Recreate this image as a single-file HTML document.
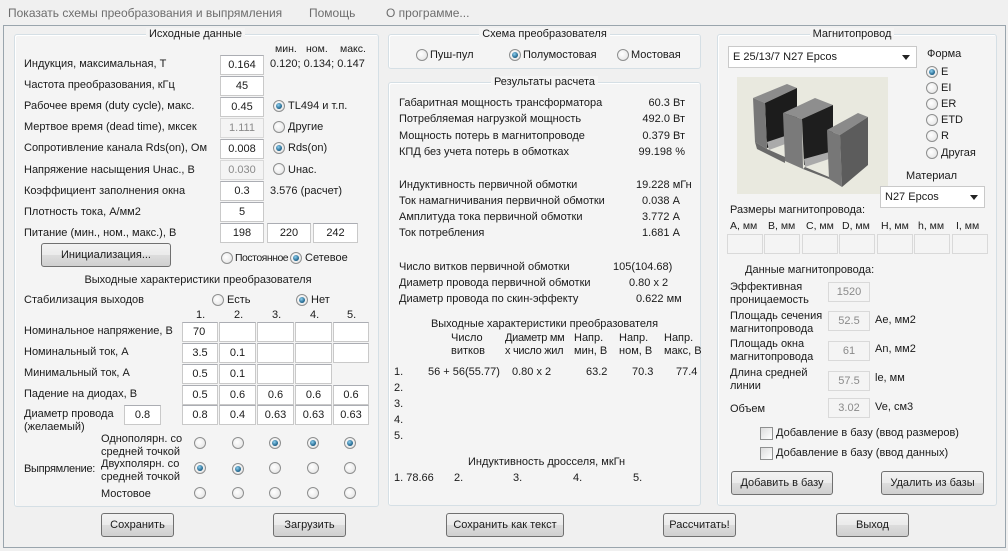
<!DOCTYPE html><html><head><meta charset="utf-8"><style>
*{margin:0;padding:0;box-sizing:border-box}
body{width:1008px;height:551px;background:#f0f0f0;font-family:"Liberation Sans","DejaVu Sans",sans-serif;font-size:11px;color:#1a1a1a;position:relative;overflow:hidden}
.t{position:absolute;white-space:nowrap;line-height:14px}
.g{position:absolute;border:1px solid #d5dfe5;border-radius:3px;background:#f4f4f4;box-shadow:inset 1px 1px 0 #fff}
.gt{position:absolute;top:-8px;left:0;right:0;text-align:center;line-height:14px}
.gt span{background:#f4f4f4;padding:0 3px}
.i{position:absolute;height:20px;background:#fff;border:1px solid #c9c9c9;border-top-color:#abadb3;text-align:center;line-height:18px}
.d{background:#f4f4f4;color:#8a8a8a;border-color:#d9d9d9}
.r{position:absolute;width:12px;height:12px;border-radius:50%;border:1px solid #8e8f8f;background:radial-gradient(circle at 40% 40%,#fff,#e0e0e0)}
.r.c::after{content:"";position:absolute;left:2px;top:2px;width:6px;height:6px;border-radius:50%;background:radial-gradient(circle at 40% 35%,#8fd0f0,#1a5f87 70%,#0d3e5e)}
.b{position:absolute;height:24px;border:1px solid #707070;border-radius:3px;background:linear-gradient(#f2f2f2 0,#ebebeb 50%,#dddddd 51%,#cfcfcf 100%);text-align:center;line-height:22px}
.cb{position:absolute;width:13px;height:13px;border:1px solid #8e8f8f;background:linear-gradient(135deg,#dcdcdc,#fff)}
.cmb{position:absolute;height:22px;background:#fff;border:1px solid #c9c9c9;line-height:20px;padding-left:4px}
.cmb::after{content:"";position:absolute;right:6px;top:8px;border:4px solid transparent;border-top:5px solid #222}
.rt{text-align:right}
</style></head><body>
<div class="t" style="left:8px;top:6px;color:#6d6d6d;font-size:12px">Показать схемы преобразования и выпрямления</div>
<div class="t" style="left:309px;top:6px;color:#6d6d6d;font-size:12px">Помощь</div>
<div class="t" style="left:386px;top:6px;color:#6d6d6d;font-size:12px">О программе...</div>
<div style="position:absolute;left:3px;top:25px;width:1003px;height:523px;border:1px solid #9aa5ad;background:#f0f0f0"></div>

<!-- Left group -->
<div class="g" style="left:14px;top:34px;width:365px;height:473px"><div class="gt" style="left:-2px"><span>Исходные данные</span></div></div>
<div class="t" style="left:275px;top:42px;font-size:10.5px">мин.</div>
<div class="t" style="left:306px;top:42px;font-size:10.5px">ном.</div>
<div class="t" style="left:340px;top:42px;font-size:10.5px">макс.</div>
<div class="t" style="left:24px;top:57px">Индукция, максимальная, Т</div><div class="i" style="left:220px;top:55px;width:44px">0.164</div><div class="t" style="left:270px;top:57px">0.120; 0.134; 0.147</div>
<div class="t" style="left:24px;top:78px">Частота преобразования, кГц</div><div class="i" style="left:220px;top:76px;width:44px">45</div>
<div class="t" style="left:24px;top:99px">Рабочее время (duty cycle), макс.</div><div class="i" style="left:220px;top:97px;width:44px">0.45</div><div class="r c" style="left:273px;top:100px"></div><div class="t" style="left:288px;top:99px">TL494 и т.п.</div>
<div class="t" style="left:24px;top:120px">Мертвое время (dead time), мксек</div><div class="i d" style="left:220px;top:118px;width:44px">1.111</div><div class="r" style="left:273px;top:121px"></div><div class="t" style="left:288px;top:120px">Другие</div>
<div class="t" style="left:24px;top:141px">Сопротивление канала Rds(on), Ом</div><div class="i" style="left:220px;top:139px;width:44px">0.008</div><div class="r c" style="left:273px;top:142px"></div><div class="t" style="left:288px;top:141px">Rds(on)</div>
<div class="t" style="left:24px;top:163px">Напряжение насыщения Uнас., В</div><div class="i d" style="left:220px;top:160px;width:44px">0.030</div><div class="r" style="left:273px;top:163px"></div><div class="t" style="left:288px;top:163px">Uнас.</div>
<div class="t" style="left:24px;top:184px">Коэффициент заполнения окна</div><div class="i" style="left:220px;top:181px;width:44px">0.3</div><div class="t" style="left:270px;top:184px">3.576 (расчет)</div>
<div class="t" style="left:24px;top:205px">Плотность тока, А/мм2</div><div class="i" style="left:220px;top:202px;width:44px">5</div>
<div class="t" style="left:24px;top:226px">Питание (мин., ном., макс.), В</div><div class="i" style="left:220px;top:223px;width:44px">198</div><div class="i" style="left:267px;top:223px;width:44px">220</div><div class="i" style="left:313px;top:223px;width:45px">242</div>
<div class="b" style="left:41px;top:243px;width:130px">Инициализация...</div>
<div class="r" style="left:221px;top:252px"></div><div class="t" style="left:235px;top:251px;font-size:10.5px;letter-spacing:-0.5px">Постоянное</div>
<div class="r c" style="left:290px;top:252px"></div><div class="t" style="left:305px;top:251px">Сетевое</div>
<div class="t" style="left:0;width:396px;text-align:center;top:273px">Выходные характеристики преобразователя</div>
<div class="t" style="left:24px;top:293px">Стабилизация выходов</div>
<div class="r" style="left:212px;top:294px"></div><div class="t" style="left:227px;top:293px">Есть</div>
<div class="r c" style="left:296px;top:294px"></div><div class="t" style="left:311px;top:293px">Нет</div>
<div class="t" style="left:196px;top:308px">1.</div><div class="t" style="left:234px;top:308px">2.</div><div class="t" style="left:272px;top:308px">3.</div><div class="t" style="left:310px;top:308px">4.</div><div class="t" style="left:347px;top:308px">5.</div>
<div class="t" style="left:24px;top:324px">Номинальное напряжение, В</div>
<div class="t" style="left:24px;top:345px">Номинальный ток, А</div>
<div class="t" style="left:24px;top:366px">Минимальный ток, А</div>
<div class="t" style="left:24px;top:387px">Падение на диодах, В</div>
<div class="t" style="left:24px;top:407px">Диаметр провода</div><div class="t" style="left:24px;top:420px">(желаемый)</div>
<div class="i" style="left:124px;top:405px;width:37px">0.8</div>
<div class="i" style="left:182px;top:322px;width:36px;text-align:left;padding-left:10px">70</div><div class="i" style="left:219px;top:322px;width:37px"></div><div class="i" style="left:257px;top:322px;width:37px"></div><div class="i" style="left:295px;top:322px;width:37px"></div><div class="i" style="left:333px;top:322px;width:36px"></div>
<div class="i" style="left:182px;top:343px;width:36px">3.5</div><div class="i" style="left:219px;top:343px;width:37px">0.1</div><div class="i" style="left:257px;top:343px;width:37px"></div><div class="i" style="left:295px;top:343px;width:37px"></div><div class="i" style="left:333px;top:343px;width:36px"></div>
<div class="i" style="left:182px;top:364px;width:36px">0.5</div><div class="i" style="left:219px;top:364px;width:37px">0.1</div><div class="i" style="left:257px;top:364px;width:37px"></div><div class="i" style="left:295px;top:364px;width:37px"></div>
<div class="i" style="left:182px;top:385px;width:36px">0.5</div><div class="i" style="left:219px;top:385px;width:37px">0.6</div><div class="i" style="left:257px;top:385px;width:37px">0.6</div><div class="i" style="left:295px;top:385px;width:37px">0.6</div><div class="i" style="left:333px;top:385px;width:36px">0.6</div>
<div class="i" style="left:182px;top:405px;width:36px">0.8</div><div class="i" style="left:219px;top:405px;width:37px">0.4</div><div class="i" style="left:257px;top:405px;width:37px">0.63</div><div class="i" style="left:295px;top:405px;width:37px">0.63</div><div class="i" style="left:333px;top:405px;width:36px">0.63</div>
<div class="t" style="left:101px;top:433px;line-height:13px">Однополярн. со<br>средней точкой</div>
<div class="t" style="left:101px;top:458px;line-height:13px">Двухполярн. со<br>средней точкой</div>
<div class="t" style="left:24px;top:462px;letter-spacing:-0.3px">Выпрямление:</div>
<div class="t" style="left:101px;top:487px">Мостовое</div>
<div class="r" style="left:194px;top:437px"></div><div class="r" style="left:232px;top:437px"></div><div class="r c" style="left:269px;top:437px"></div><div class="r c" style="left:307px;top:437px"></div><div class="r c" style="left:344px;top:437px"></div>
<div class="r c" style="left:194px;top:462px"></div><div class="r c" style="left:232px;top:463px"></div><div class="r" style="left:269px;top:462px"></div><div class="r" style="left:307px;top:462px"></div><div class="r" style="left:344px;top:462px"></div>
<div class="r" style="left:194px;top:487px"></div><div class="r" style="left:232px;top:487px"></div><div class="r" style="left:269px;top:487px"></div><div class="r" style="left:307px;top:487px"></div><div class="r" style="left:344px;top:487px"></div>

<!-- Middle -->
<div class="g" style="left:388px;top:34px;width:313px;height:35px"><div class="gt"><span>Схема преобразователя</span></div></div>
<div class="r" style="left:416px;top:49px"></div><div class="t" style="left:430px;top:48px">Пуш-пул</div>
<div class="r c" style="left:509px;top:49px"></div><div class="t" style="left:523px;top:48px">Полумостовая</div>
<div class="r" style="left:617px;top:49px"></div><div class="t" style="left:631px;top:48px">Мостовая</div>
<div class="g" style="left:388px;top:82px;width:313px;height:424px"><div class="gt"><span>Результаты расчета</span></div></div>
<div class="t" style="left:399px;top:96px">Габаритная мощность трансформатора</div><div class="t rt" style="left:600px;width:85px;top:96px">60.3 Вт</div>
<div class="t" style="left:399px;top:112px">Потребляемая нагрузкой мощность</div><div class="t rt" style="left:600px;width:85px;top:112px">492.0 Вт</div>
<div class="t" style="left:399px;top:129px">Мощность потерь в магнитопроводе</div><div class="t rt" style="left:600px;width:85px;top:129px">0.379 Вт</div>
<div class="t" style="left:399px;top:145px">КПД без учета потерь в обмотках</div><div class="t rt" style="left:600px;width:85px;top:145px">99.198 %</div>
<div class="t" style="left:399px;top:178px">Индуктивность первичной обмотки</div><div class="t" style="left:636px;top:178px">19.228 мГн</div>
<div class="t" style="left:399px;top:194px">Ток намагничивания первичной обмотки</div><div class="t" style="left:642px;top:194px">0.038 А</div>
<div class="t" style="left:399px;top:210px">Амплитуда тока первичной обмотки</div><div class="t" style="left:642px;top:210px">3.772 А</div>
<div class="t" style="left:399px;top:226px">Ток потребления</div><div class="t" style="left:642px;top:226px">1.681 А</div>
<div class="t" style="left:399px;top:260px">Число витков первичной обмотки</div><div class="t" style="left:613px;top:260px">105(104.68)</div>
<div class="t" style="left:399px;top:276px">Диаметр провода первичной обмотки</div><div class="t" style="left:629px;top:276px">0.80 x 2</div>
<div class="t" style="left:399px;top:292px">Диаметр провода по скин-эффекту</div><div class="t" style="left:636px;top:292px">0.622 мм</div>
<div class="t" style="left:388px;width:313px;text-align:center;top:317px">Выходные характеристики преобразователя</div>
<div class="t" style="left:451px;top:332px;line-height:13px">Число<br>витков</div>
<div class="t" style="left:505px;top:332px;line-height:13px;letter-spacing:-0.3px">Диаметр мм<br>х число жил</div>
<div class="t" style="left:574px;top:332px;line-height:13px">Напр.<br>мин, В</div>
<div class="t" style="left:619px;top:332px;line-height:13px">Напр.<br>ном, В</div>
<div class="t" style="left:664px;top:332px;line-height:13px">Напр.<br>макс, В</div>
<div class="t" style="left:394px;top:365px">1.</div><div class="t" style="left:428px;top:365px">56 + 56(55.77)</div><div class="t" style="left:512px;top:365px">0.80 x 2</div><div class="t" style="left:586px;top:365px">63.2</div><div class="t" style="left:632px;top:365px">70.3</div><div class="t" style="left:676px;top:365px">77.4</div>
<div class="t" style="left:394px;top:381px">2.</div><div class="t" style="left:394px;top:397px">3.</div><div class="t" style="left:394px;top:413px">4.</div><div class="t" style="left:394px;top:429px">5.</div>
<div class="t" style="left:468px;top:455px">Индуктивность дросселя, мкГн</div>
<div class="t" style="left:394px;top:471px">1. 78.66</div><div class="t" style="left:454px;top:471px">2.</div><div class="t" style="left:513px;top:471px">3.</div><div class="t" style="left:573px;top:471px">4.</div><div class="t" style="left:633px;top:471px">5.</div>

<!-- Right -->
<div class="g" style="left:717px;top:34px;width:280px;height:472px"><div class="gt" style="left:-10px"><span>Магнитопровод</span></div></div>
<div class="cmb" style="left:728px;top:46px;width:189px">E 25/13/7 N27 Epcos</div>
<div class="t" style="left:927px;top:47px">Форма</div>
<div class="r c" style="left:926px;top:66px"></div><div class="t" style="left:941px;top:65px">E</div>
<div class="r" style="left:926px;top:82px"></div><div class="t" style="left:941px;top:81px">EI</div>
<div class="r" style="left:926px;top:98px"></div><div class="t" style="left:941px;top:97px">ER</div>
<div class="r" style="left:926px;top:114px"></div><div class="t" style="left:941px;top:113px">ETD</div>
<div class="r" style="left:926px;top:130px"></div><div class="t" style="left:941px;top:129px">R</div>
<div class="r" style="left:926px;top:147px"></div><div class="t" style="left:941px;top:146px">Другая</div>
<div style="position:absolute;left:737px;top:77px;width:151px;height:117px;background:#e9e9df">
<svg width="151" height="117" viewBox="0 0 151 117">
<polygon points="16,21 50,7 60,11 28,26" fill="#8c8c8c"/>
<polygon points="28,26 60,11 60,60 30,71" fill="#1c1c1c"/>
<polygon points="30,65 60,55 62,62 32,73" fill="#aaa"/>
<polygon points="16,21 28,26 30,72 18,65" fill="#777"/>
<polygon points="18,65 30,72 48,80 48,86 20,72" fill="#6a6a6a"/>
<polygon points="46,36 78,21 96,28 65,42" fill="#8e8e8e"/>
<polygon points="46,36 65,42 66,92 48,84" fill="#7a7a7a"/>
<polygon points="65,42 96,28 96,80 67,88" fill="#1e1e1e"/>
<polygon points="67,82 96,74 98,80 68,90" fill="#aaa"/>
<polygon points="90,53 121,36 131,40 103,58" fill="#8a8a8a"/>
<polygon points="90,53 103,58 105,110 92,102" fill="#777"/>
<polygon points="103,58 131,40 131,88 105,110" fill="#5c5c5c"/>
<polygon points="66,92 68,90 92,100 92,102" fill="#666"/>
</svg></div>
<div class="t" style="left:906px;top:169px">Материал</div>
<div class="cmb" style="left:880px;top:186px;width:105px">N27 Epcos</div>
<div class="t" style="left:730px;top:203px">Размеры магнитопровода:</div>
<div class="t" style="left:730px;top:219px;font-size:10.5px">A, мм</div><div class="t" style="left:768px;top:219px;font-size:10.5px">B, мм</div><div class="t" style="left:806px;top:219px;font-size:10.5px">C, мм</div><div class="t" style="left:842px;top:219px;font-size:10.5px">D, мм</div><div class="t" style="left:881px;top:219px;font-size:10.5px">H, мм</div><div class="t" style="left:918px;top:219px;font-size:10.5px">h, мм</div><div class="t" style="left:956px;top:219px;font-size:10.5px">I, мм</div>
<div class="i d" style="left:727px;top:234px;width:36px"></div><div class="i d" style="left:764px;top:234px;width:36px"></div><div class="i d" style="left:802px;top:234px;width:36px"></div><div class="i d" style="left:839px;top:234px;width:36px"></div><div class="i d" style="left:877px;top:234px;width:36px"></div><div class="i d" style="left:914px;top:234px;width:36px"></div><div class="i d" style="left:952px;top:234px;width:36px"></div>
<div class="t" style="left:745px;top:263px">Данные магнитопровода:</div>
<div class="t" style="left:730px;top:281px;line-height:13px">Эффективная<br>проницаемость</div><div class="i d" style="left:828px;top:282px;width:42px">1520</div>
<div class="t" style="left:730px;top:310px;line-height:13px">Площадь сечения<br>магнитопровода</div><div class="i d" style="left:828px;top:311px;width:42px">52.5</div><div class="t" style="left:875px;top:313px">Ae, мм2</div>
<div class="t" style="left:730px;top:338px;line-height:13px">Площадь окна<br>магнитопровода</div><div class="i d" style="left:828px;top:341px;width:42px">61</div><div class="t" style="left:875px;top:342px">An, мм2</div>
<div class="t" style="left:730px;top:367px;line-height:13px">Длина средней<br>линии</div><div class="i d" style="left:828px;top:371px;width:42px">57.5</div><div class="t" style="left:875px;top:371px">le, мм</div>
<div class="t" style="left:730px;top:402px">Объем</div><div class="i d" style="left:828px;top:398px;width:42px">3.02</div><div class="t" style="left:875px;top:400px">Ve, см3</div>
<div class="cb" style="left:760px;top:427px"></div><div class="t" style="left:776px;top:426px">Добавление в базу (ввод размеров)</div>
<div class="cb" style="left:760px;top:447px"></div><div class="t" style="left:776px;top:446px">Добавление в базу (ввод данных)</div>
<div class="b" style="left:731px;top:471px;width:102px">Добавить в базу</div>
<div class="b" style="left:881px;top:471px;width:103px">Удалить из базы</div>

<div class="b" style="left:101px;top:513px;width:73px">Сохранить</div>
<div class="b" style="left:273px;top:513px;width:73px">Загрузить</div>
<div class="b" style="left:446px;top:513px;width:118px">Сохранить как текст</div>
<div class="b" style="left:663px;top:513px;width:73px">Рассчитать!</div>
<div class="b" style="left:836px;top:513px;width:73px">Выход</div>
</body></html>
